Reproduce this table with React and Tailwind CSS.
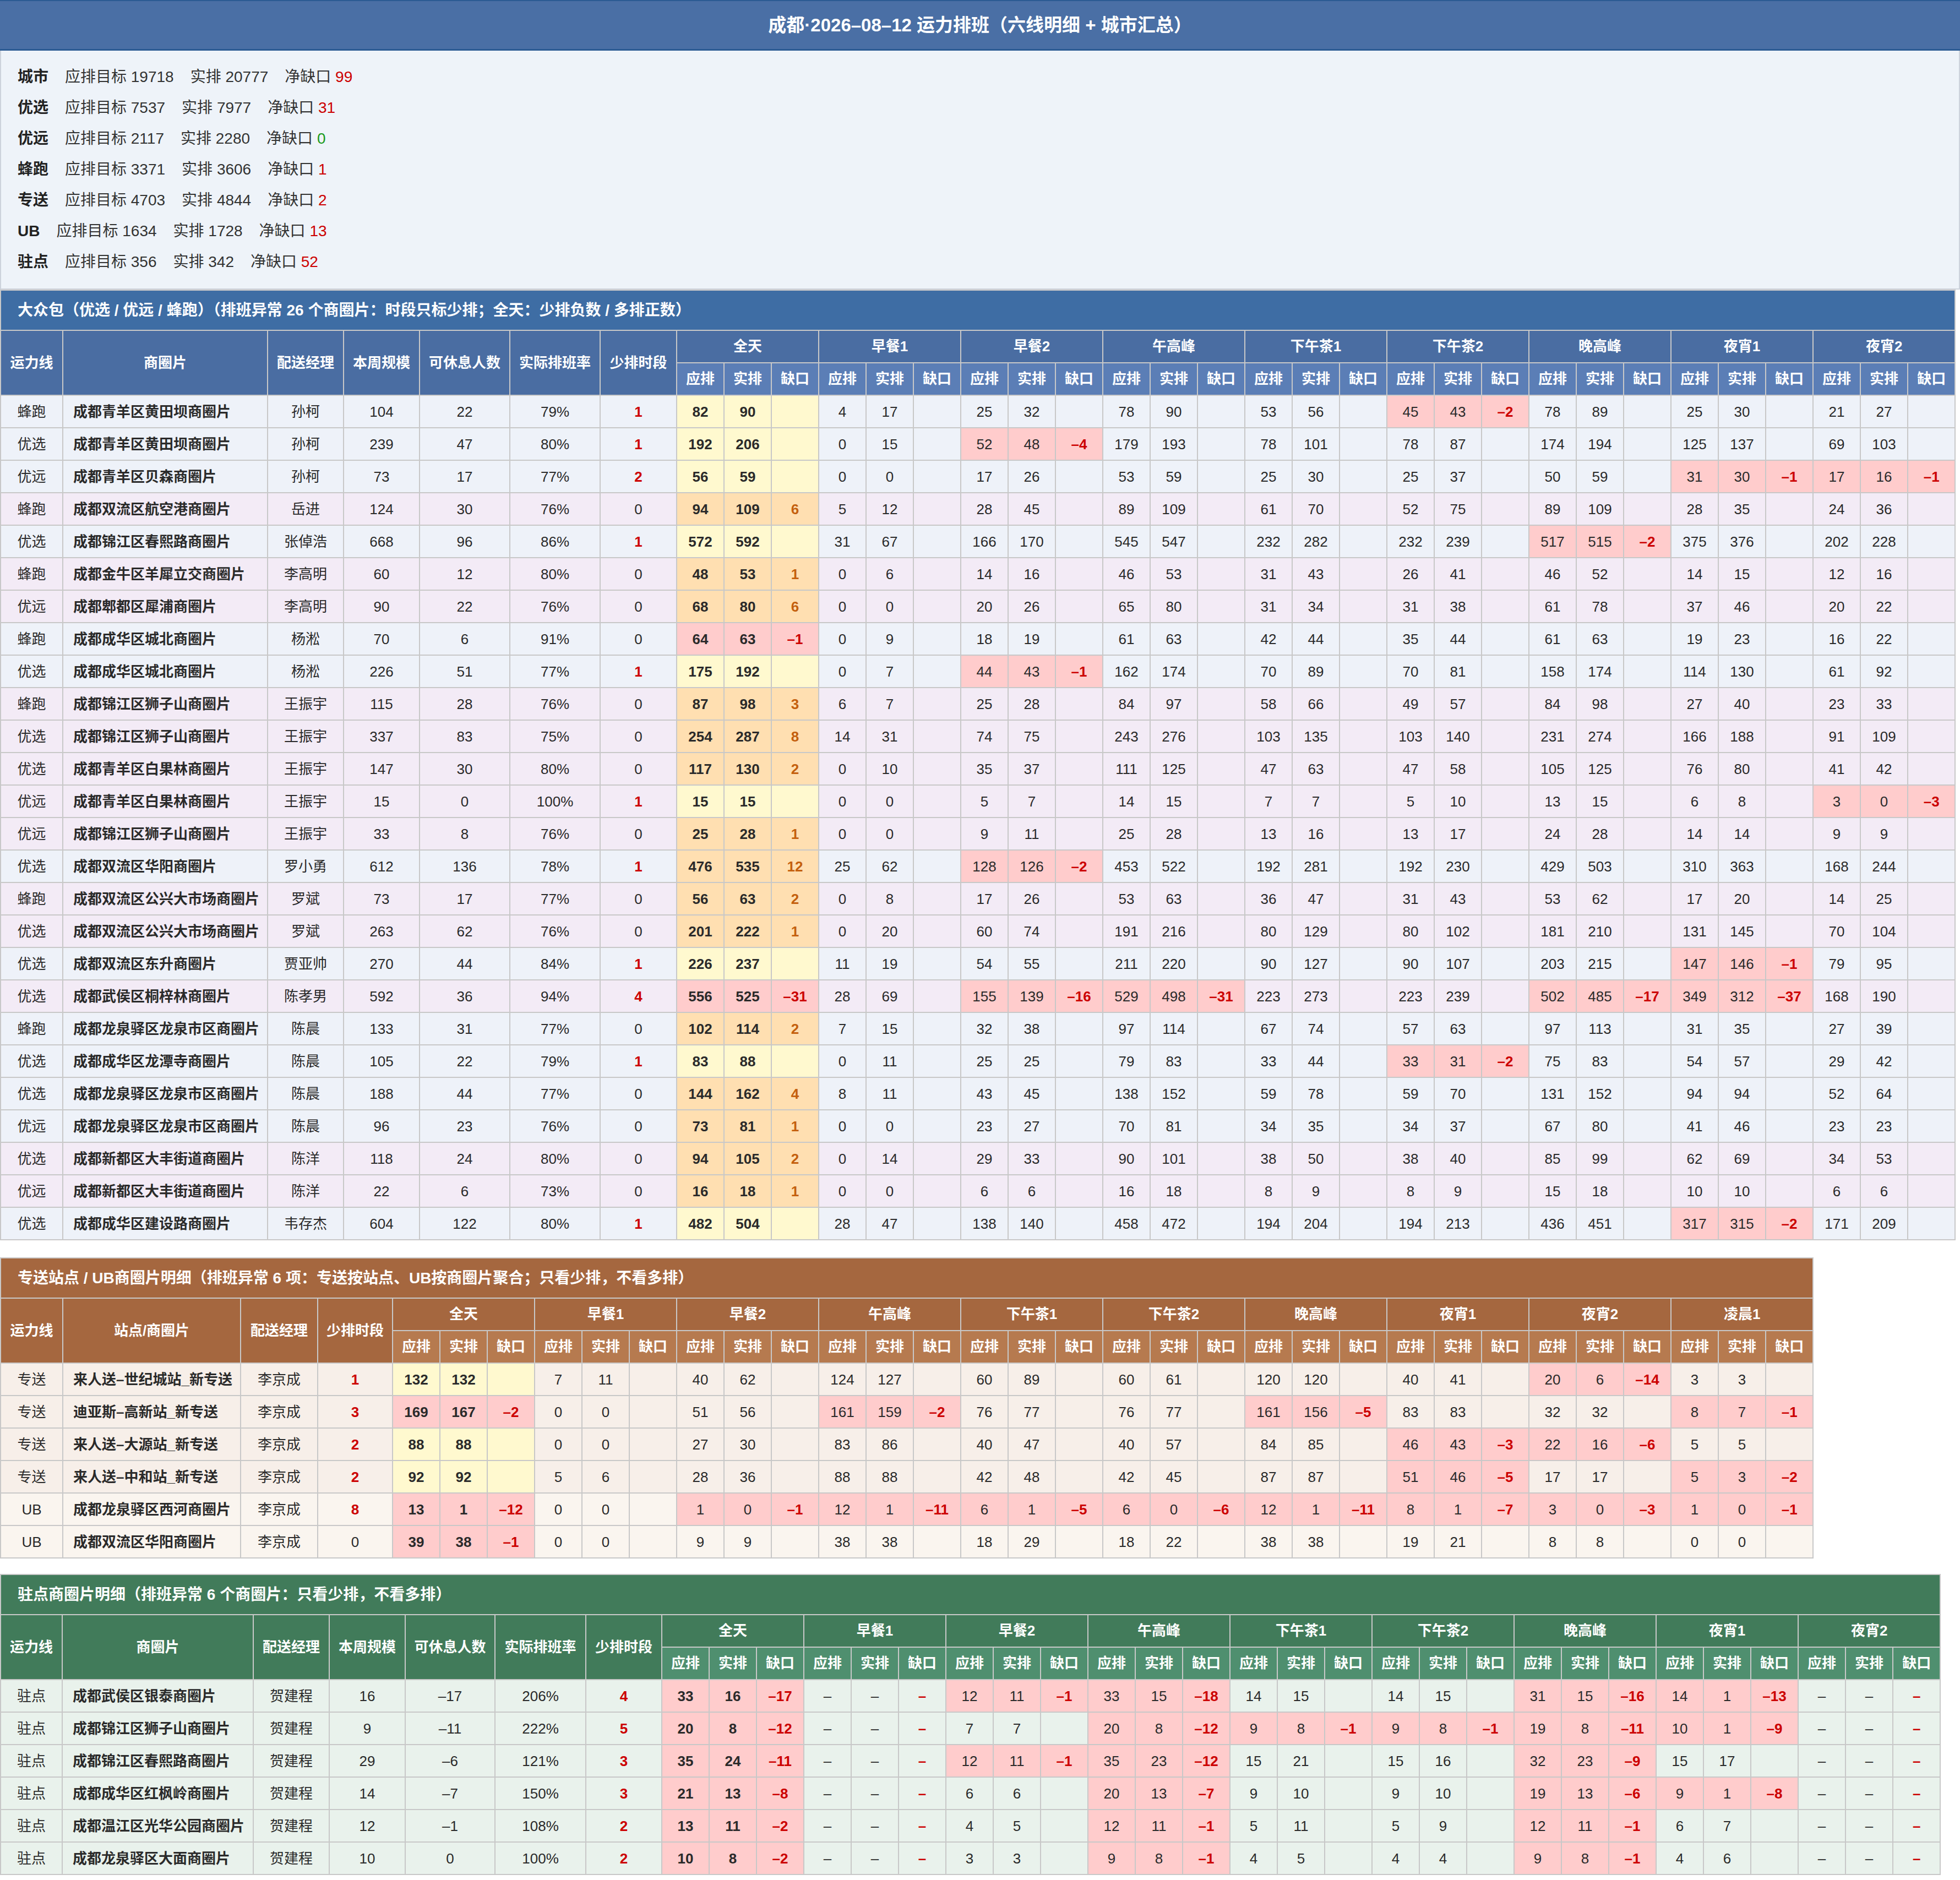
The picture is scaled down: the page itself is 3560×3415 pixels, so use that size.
import React from "react";

const FONT = "font-['Liberation_Sans','Noto_Sans_CJK_SC',sans-serif]";

const PINK = "bg-[#ffcccc]";
const YELLOW = "bg-[#fff9cf]";
const ORANGE = "bg-[#ffdfb1]";

function fmt(n) {
  const v = Number(n);
  return v < 0 ? "–" + Math.abs(v) : String(v);
}

function parseGroups(s) {
  return s.split("|").map((g) => g.trim().split(/\s+/));
}

const SUMMARY = [
  ["城市", 19718, 20777, 99],
  ["优选", 7537, 7977, 31],
  ["优远", 2117, 2280, 0],
  ["蜂跑", 3371, 3606, 1],
  ["专送", 4703, 4844, 2],
  ["UB", 1634, 1728, 13],
  ["驻点", 356, 342, 52],
];

const T1_ROWS = [
  ["蜂跑", "成都青羊区黄田坝商圈片", "孙柯", 104, 22, "79%", 1, "82 90|4 17|25 32|78 90|53 56|45 43 -2|78 89|25 30|21 27"],
  ["优选", "成都青羊区黄田坝商圈片", "孙柯", 239, 47, "80%", 1, "192 206|0 15|52 48 -4|179 193|78 101|78 87|174 194|125 137|69 103"],
  ["优远", "成都青羊区贝森商圈片", "孙柯", 73, 17, "77%", 2, "56 59|0 0|17 26|53 59|25 30|25 37|50 59|31 30 -1|17 16 -1"],
  ["蜂跑", "成都双流区航空港商圈片", "岳进", 124, 30, "76%", 0, "94 109 6|5 12|28 45|89 109|61 70|52 75|89 109|28 35|24 36"],
  ["优选", "成都锦江区春熙路商圈片", "张倬浩", 668, 96, "86%", 1, "572 592|31 67|166 170|545 547|232 282|232 239|517 515 -2|375 376|202 228"],
  ["蜂跑", "成都金牛区羊犀立交商圈片", "李高明", 60, 12, "80%", 0, "48 53 1|0 6|14 16|46 53|31 43|26 41|46 52|14 15|12 16"],
  ["优远", "成都郫都区犀浦商圈片", "李高明", 90, 22, "76%", 0, "68 80 6|0 0|20 26|65 80|31 34|31 38|61 78|37 46|20 22"],
  ["蜂跑", "成都成华区城北商圈片", "杨淞", 70, 6, "91%", 0, "64 63 -1|0 9|18 19|61 63|42 44|35 44|61 63|19 23|16 22"],
  ["优选", "成都成华区城北商圈片", "杨淞", 226, 51, "77%", 1, "175 192|0 7|44 43 -1|162 174|70 89|70 81|158 174|114 130|61 92"],
  ["蜂跑", "成都锦江区狮子山商圈片", "王振宇", 115, 28, "76%", 0, "87 98 3|6 7|25 28|84 97|58 66|49 57|84 98|27 40|23 33"],
  ["优选", "成都锦江区狮子山商圈片", "王振宇", 337, 83, "75%", 0, "254 287 8|14 31|74 75|243 276|103 135|103 140|231 274|166 188|91 109"],
  ["优选", "成都青羊区白果林商圈片", "王振宇", 147, 30, "80%", 0, "117 130 2|0 10|35 37|111 125|47 63|47 58|105 125|76 80|41 42"],
  ["优远", "成都青羊区白果林商圈片", "王振宇", 15, 0, "100%", 1, "15 15|0 0|5 7|14 15|7 7|5 10|13 15|6 8|3 0 -3"],
  ["优远", "成都锦江区狮子山商圈片", "王振宇", 33, 8, "76%", 0, "25 28 1|0 0|9 11|25 28|13 16|13 17|24 28|14 14|9 9"],
  ["优选", "成都双流区华阳商圈片", "罗小勇", 612, 136, "78%", 1, "476 535 12|25 62|128 126 -2|453 522|192 281|192 230|429 503|310 363|168 244"],
  ["蜂跑", "成都双流区公兴大市场商圈片", "罗斌", 73, 17, "77%", 0, "56 63 2|0 8|17 26|53 63|36 47|31 43|53 62|17 20|14 25"],
  ["优选", "成都双流区公兴大市场商圈片", "罗斌", 263, 62, "76%", 0, "201 222 1|0 20|60 74|191 216|80 129|80 102|181 210|131 145|70 104"],
  ["优选", "成都双流区东升商圈片", "贾亚帅", 270, 44, "84%", 1, "226 237|11 19|54 55|211 220|90 127|90 107|203 215|147 146 -1|79 95"],
  ["优选", "成都武侯区桐梓林商圈片", "陈孝男", 592, 36, "94%", 4, "556 525 -31|28 69|155 139 -16|529 498 -31|223 273|223 239|502 485 -17|349 312 -37|168 190"],
  ["蜂跑", "成都龙泉驿区龙泉市区商圈片", "陈晨", 133, 31, "77%", 0, "102 114 2|7 15|32 38|97 114|67 74|57 63|97 113|31 35|27 39"],
  ["优选", "成都成华区龙潭寺商圈片", "陈晨", 105, 22, "79%", 1, "83 88|0 11|25 25|79 83|33 44|33 31 -2|75 83|54 57|29 42"],
  ["优选", "成都龙泉驿区龙泉市区商圈片", "陈晨", 188, 44, "77%", 0, "144 162 4|8 11|43 45|138 152|59 78|59 70|131 152|94 94|52 64"],
  ["优远", "成都龙泉驿区龙泉市区商圈片", "陈晨", 96, 23, "76%", 0, "73 81 1|0 0|23 27|70 81|34 35|34 37|67 80|41 46|23 23"],
  ["优选", "成都新都区大丰街道商圈片", "陈洋", 118, 24, "80%", 0, "94 105 2|0 14|29 33|90 101|38 50|38 40|85 99|62 69|34 53"],
  ["优远", "成都新都区大丰街道商圈片", "陈洋", 22, 6, "73%", 0, "16 18 1|0 0|6 6|16 18|8 9|8 9|15 18|10 10|6 6"],
  ["优选", "成都成华区建设路商圈片", "韦存杰", 604, 122, "80%", 1, "482 504|28 47|138 140|458 472|194 204|194 213|436 451|317 315 -2|171 209"],
];

const T2_ROWS = [
  ["专送", "来人送–世纪城站_新专送", "李京成", 1, "132 132|7 11|40 62|124 127|60 89|60 61|120 120|40 41|20 6 -14|3 3"],
  ["专送", "迪亚斯–高新站_新专送", "李京成", 3, "169 167 -2|0 0|51 56|161 159 -2|76 77|76 77|161 156 -5|83 83|32 32|8 7 -1"],
  ["专送", "来人送–大源站_新专送", "李京成", 2, "88 88|0 0|27 30|83 86|40 47|40 57|84 85|46 43 -3|22 16 -6|5 5"],
  ["专送", "来人送–中和站_新专送", "李京成", 2, "92 92|5 6|28 36|88 88|42 48|42 45|87 87|51 46 -5|17 17|5 3 -2"],
  ["UB", "成都龙泉驿区西河商圈片", "李京成", 8, "13 1 -12|0 0|1 0 -1|12 1 -11|6 1 -5|6 0 -6|12 1 -11|8 1 -7|3 0 -3|1 0 -1"],
  ["UB", "成都双流区华阳商圈片", "李京成", 0, "39 38 -1|0 0|9 9|38 38|18 29|18 22|38 38|19 21|8 8|0 0"],
];

const T3_ROWS = [
  ["驻点", "成都武侯区银泰商圈片", "贺建程", 16, -17, "206%", 4, "33 16 -17|–|12 11 -1|33 15 -18|14 15|14 15|31 15 -16|14 1 -13|–"],
  ["驻点", "成都锦江区狮子山商圈片", "贺建程", 9, -11, "222%", 5, "20 8 -12|–|7 7|20 8 -12|9 8 -1|9 8 -1|19 8 -11|10 1 -9|–"],
  ["驻点", "成都锦江区春熙路商圈片", "贺建程", 29, -6, "121%", 3, "35 24 -11|–|12 11 -1|35 23 -12|15 21|15 16|32 23 -9|15 17|–"],
  ["驻点", "成都成华区红枫岭商圈片", "贺建程", 14, -7, "150%", 3, "21 13 -8|–|6 6|20 13 -7|9 10|9 10|19 13 -6|9 1 -8|–"],
  ["驻点", "成都温江区光华公园商圈片", "贺建程", 12, -1, "108%", 2, "13 11 -2|–|4 5|12 11 -1|5 11|5 9|12 11 -1|6 7|–"],
  ["驻点", "成都龙泉驿区大面商圈片", "贺建程", 10, 0, "100%", 2, "10 8 -2|–|3 3|9 8 -1|4 5|4 4|9 8 -1|4 6|–"],
];

const GROUPS9 = ["全天", "早餐1", "早餐2", "午高峰", "下午茶1", "下午茶2", "晚高峰", "夜宵1", "夜宵2"];
const GROUPS10 = [...GROUPS9, "凌晨1"];

const CELL = "border-2 border-[#c8c8c8] p-0";
const TD = `${CELL} h-[59px] text-center text-[26px] leading-none text-[#2a2a2a]`;

function GroupCells({ g, first }) {
  if (g[0] === "–") {
    return (
      <>
        <td className={TD}>–</td>
        <td className={TD}>–</td>
        <td className={`${TD} text-[#cc0000] font-bold`}>–</td>
      </>
    );
  }
  const gap = g[2] !== undefined ? Number(g[2]) : null;
  let bg = "";
  if (first) bg = gap !== null && gap < 0 ? PINK : gap !== null && gap > 0 ? ORANGE : YELLOW;
  else if (gap !== null && gap < 0) bg = PINK;
  const numW = first ? "font-bold" : "";
  const gapCls = gap === null ? "" : gap < 0 ? "text-[#cc0000] font-bold" : "text-[#c4600e] font-bold";
  return (
    <>
      <td className={`${TD} ${bg} ${numW}`}>{g[0]}</td>
      <td className={`${TD} ${bg} ${numW}`}>{g[1]}</td>
      <td className={`${TD} ${bg} ${gapCls}`}>{gap === null ? "" : fmt(gap)}</td>
    </>
  );
}

function Section({ title, theme, widths, tableW, fixedHeads, groups, children }) {
  const totalCols = widths.length;
  return (
    <table className={`border-collapse table-fixed ${tableW}`}>
      <colgroup>
        {widths.map((w, i) => (
          <col key={i} className={w} />
        ))}
      </colgroup>
      <thead>
        <tr>
          <th
            colSpan={totalCols}
            className={`${CELL} h-[73px] ${theme.title} text-left pl-[30px] text-white text-[28px] font-bold`}
          >
            {title}
          </th>
        </tr>
        <tr>
          {fixedHeads.map((h) => (
            <th key={h} rowSpan={2} className={`${CELL} ${theme.head} text-white text-[26px] font-bold text-center`}>
              {h}
            </th>
          ))}
          {groups.map((g) => (
            <th key={g} colSpan={3} className={`${CELL} h-[59px] ${theme.head} text-white text-[26px] font-bold text-center`}>
              {g}
            </th>
          ))}
        </tr>
        <tr>
          {groups.map((g) => (
            <React.Fragment key={g}>
              <th className={`${CELL} h-[59px] ${theme.sub} text-white text-[26px] font-bold text-center`}>应排</th>
              <th className={`${CELL} h-[59px] ${theme.sub} text-white text-[26px] font-bold text-center`}>实排</th>
              <th className={`${CELL} h-[59px] ${theme.sub} text-white text-[26px] font-bold text-center`}>缺口</th>
            </React.Fragment>
          ))}
        </tr>
      </thead>
      <tbody>{children}</tbody>
    </table>
  );
}

const W86 = "w-[86px]";
const T1_W = ["w-[113px]", "w-[372px]", "w-[138px]", "w-[138px]", "w-[164px]", "w-[164px]", "w-[139px]", ...Array(27).fill(W86)];
const T2_W = ["w-[113px]", "w-[323px]", "w-[140px]", "w-[136px]", ...Array(30).fill(W86)];
const T3_W = ["w-[112px]", "w-[347px]", "w-[138px]", "w-[138px]", "w-[163px]", "w-[165px]", "w-[138px]", ...Array(27).fill(W86)];

function ShortCell({ v }) {
  return <td className={`${TD} ${v > 0 ? "text-[#cc0000] font-bold" : ""}`}>{v}</td>;
}

export default function App() {
  let lastMgr = null;
  let stripe = 1;
  const t1Bgs = T1_ROWS.map((r) => {
    if (r[2] !== lastMgr) {
      stripe = 1 - stripe;
      lastMgr = r[2];
    }
    return stripe === 0 ? "bg-[#eef2f9]" : "bg-[#f3ebf6]";
  });

  return (
    <div className={`${FONT} bg-white w-[3560px] min-h-[3415px] text-[#2a2a2a]`}>
      <div className="h-[92px] bg-[#4a6fa5] border-t-2 border-b-[3px] border-[#2c5b93] flex items-center justify-center text-white text-[33px] font-bold">
        成都·2026–08–12 运力排班（六线明细 + 城市汇总）
      </div>
      <div className="bg-[#eef3f9] border-x-2 border-b-2 border-[#cdd3dc] px-[30px] py-[20px]">
        {SUMMARY.map(([label, a, b, net]) => (
          <div key={label} className="flex items-center gap-[30px] h-[56px] text-[28px] text-[#333]">
            <span className="font-bold text-[#222]">{label}</span>
            <span>应排目标 {a}</span>
            <span>实排 {b}</span>
            <span>
              净缺口 <span className={net === 0 ? "text-[#1a9a1a]" : "text-[#cc0000]"}>{net}</span>
            </span>
          </div>
        ))}
      </div>

      <Section
        title="大众包（优选 / 优远 / 蜂跑）（排班异常 26 个商圈片：时段只标少排；全天：少排负数 / 多排正数）"
        theme={{ title: "bg-[#3e6da4]", head: "bg-[#4a6da2]", sub: "bg-[#5b7eb6]" }}
        widths={T1_W}
        tableW="w-[3550px]"
        fixedHeads={["运力线", "商圈片", "配送经理", "本周规模", "可休息人数", "实际排班率", "少排时段"]}
        groups={GROUPS9}
      >
        {T1_ROWS.map((r, i) => (
          <tr key={i} className={t1Bgs[i]}>
            <td className={TD}>{r[0]}</td>
            <td className={`${TD} text-left pl-[18px] font-bold`}>{r[1]}</td>
            <td className={TD}>{r[2]}</td>
            <td className={TD}>{r[3]}</td>
            <td className={TD}>{r[4]}</td>
            <td className={TD}>{r[5]}</td>
            <ShortCell v={r[6]} />
            {parseGroups(r[7]).map((g, j) => (
              <GroupCells key={j} g={g} first={j === 0} />
            ))}
          </tr>
        ))}
      </Section>

      <div className="mt-[31px]">
        <Section
          title="专送站点 / UB商圈片明细（排班异常 6 项：专送按站点、UB按商圈片聚合；只看少排，不看多排）"
          theme={{ title: "bg-[#a5673f]", head: "bg-[#a5673f]", sub: "bg-[#b67a4f]" }}
          widths={T2_W}
          tableW="w-[3292px]"
          fixedHeads={["运力线", "站点/商圈片", "配送经理", "少排时段"]}
          groups={GROUPS10}
        >
          {T2_ROWS.map((r, i) => (
            <tr key={i} className={r[0] === "UB" ? "bg-[#faf5ef]" : "bg-[#f7efe9]"}>
              <td className={TD}>{r[0]}</td>
              <td className={`${TD} text-left pl-[18px] font-bold`}>{r[1]}</td>
              <td className={TD}>{r[2]}</td>
              <ShortCell v={r[3]} />
              {parseGroups(r[4]).map((g, j) => (
                <GroupCells key={j} g={g} first={j === 0} />
              ))}
            </tr>
          ))}
        </Section>
      </div>

      <div className="mt-[28px]">
        <Section
          title="驻点商圈片明细（排班异常 6 个商圈片：只看少排，不看多排）"
          theme={{ title: "bg-[#417b5a]", head: "bg-[#417b5a]", sub: "bg-[#4f8f6f]" }}
          widths={T3_W}
          tableW="w-[3523px]"
          fixedHeads={["运力线", "商圈片", "配送经理", "本周规模", "可休息人数", "实际排班率", "少排时段"]}
          groups={GROUPS9}
        >
          {T3_ROWS.map((r, i) => (
            <tr key={i} className="bg-[#e9f2ec]">
              <td className={TD}>{r[0]}</td>
              <td className={`${TD} text-left pl-[18px] font-bold`}>{r[1]}</td>
              <td className={TD}>{r[2]}</td>
              <td className={TD}>{r[3]}</td>
              <td className={TD}>{fmt(r[4])}</td>
              <td className={TD}>{r[5]}</td>
              <ShortCell v={r[6]} />
              {parseGroups(r[7]).map((g, j) => (
                <GroupCells key={j} g={g} first={j === 0} />
              ))}
            </tr>
          ))}
        </Section>
      </div>
    </div>
  );
}
